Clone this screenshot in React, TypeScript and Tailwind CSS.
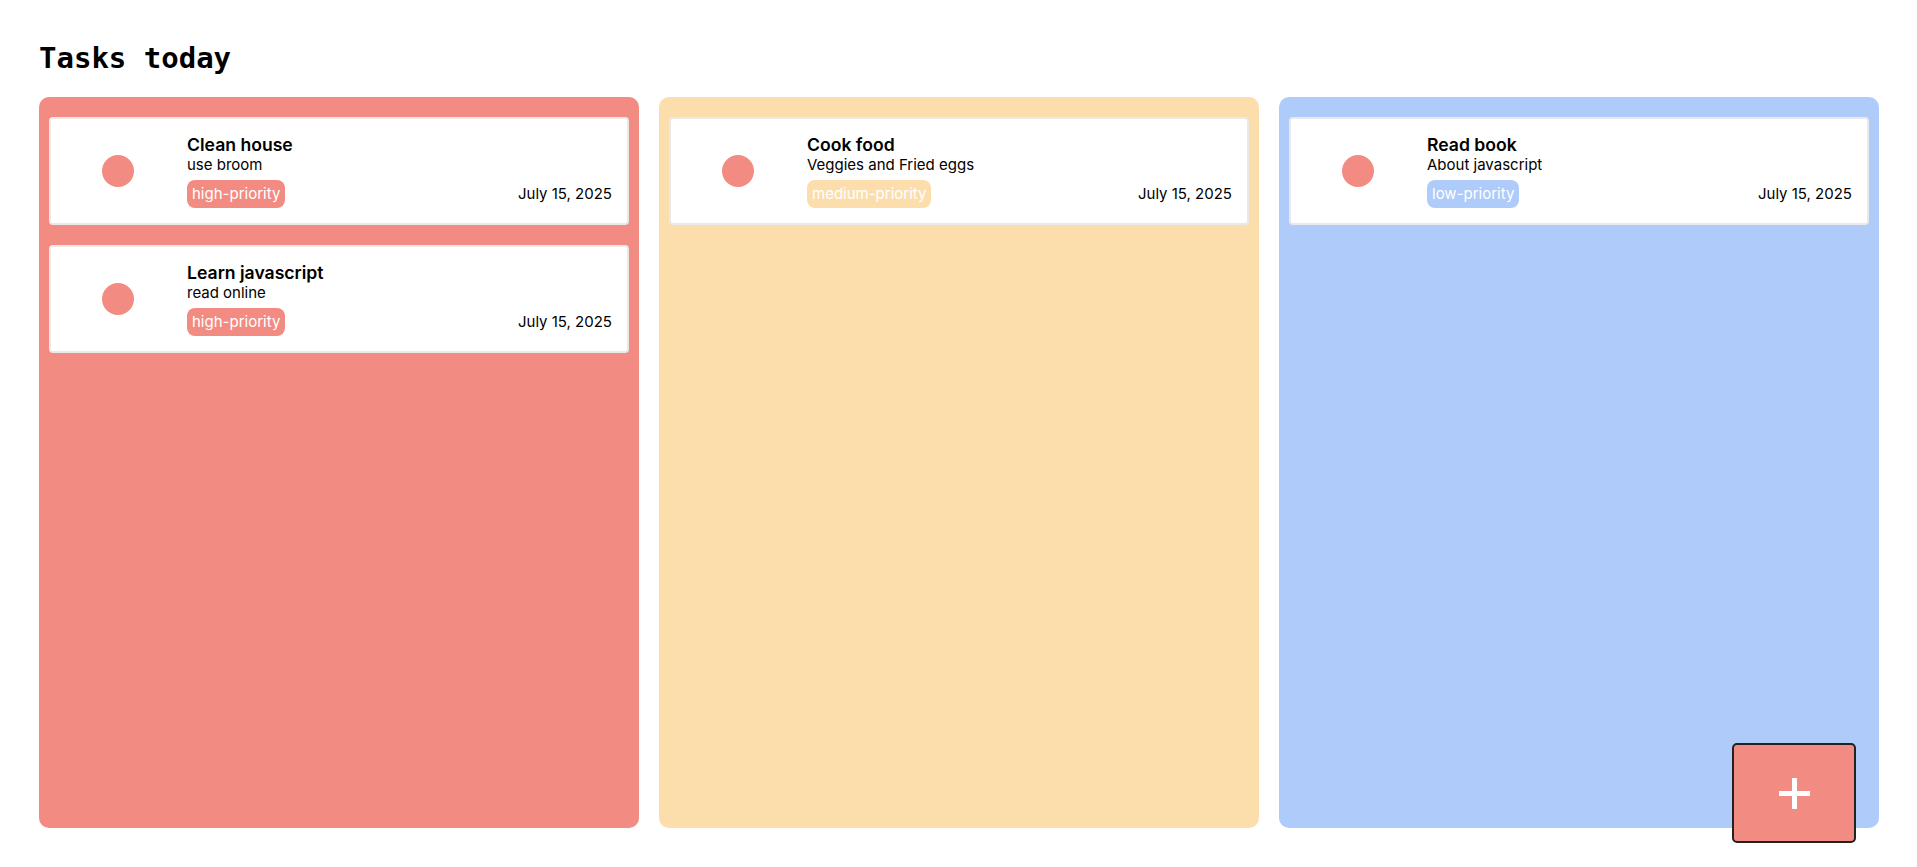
const COLUMNS = [
  {
    color: 'bg-[#f28b82]',
    tasks: [
      { title: 'Clean house', desc: 'use broom', priority: 'high-priority', date: 'July 15, 2025' },
      { title: 'Learn javascript', desc: 'read online', priority: 'high-priority', date: 'July 15, 2025' },
    ],
  },
  {
    color: 'bg-[#fcdead]',
    tasks: [
      { title: 'Cook food', desc: 'Veggies and Fried eggs', priority: 'medium-priority', date: 'July 15, 2025' },
    ],
  },
  {
    color: 'bg-[#aecbfa]',
    tasks: [
      { title: 'Read book', desc: 'About javascript', priority: 'low-priority', date: 'July 15, 2025' },
    ],
  },
];

function TaskCard({ task, color }: { task: (typeof COLUMNS)[number]['tasks'][number]; color: string }) {
  return (
    <div className="flex items-center bg-white border-2 border-[#e9e9e9] rounded-[4px] p-[15px]">
      {/* dot */}
      <div className="w-[121px] shrink-0 flex items-center">
        <div className="ml-[36px] w-8 h-8 rounded-full bg-[#f28b82]" />
      </div>
      {/* text */}
      <div className="flex-1 min-w-0">
        <p className="text-[17.6px] font-semibold text-black leading-[22px]">{task.title}</p>
        <p className="text-[15px] text-black leading-[1.21]">{task.desc}</p>
        <div className="flex items-end justify-between mt-[6px]">
          <span className={`${color} text-white text-[15px] leading-[1.21] px-[5px] py-[5px] rounded-[8px]`}>
            {task.priority}
          </span>
          <span className="text-[15px] text-black leading-[1.21] pb-[5px]">{task.date}</span>
        </div>
      </div>
    </div>
  );
}

export default function App() {
  return (
    <div className="min-h-screen bg-white pl-[39px] pr-[38px] pt-[41px] font-['Inter','Noto_Sans',sans-serif]">
      <h1 className="font-['DejaVu_Sans_Mono',monospace] font-bold text-[29px] leading-[1.2] text-black mb-[21px]">
        Tasks today
      </h1>

      <div className="grid grid-cols-3 gap-5">
        {COLUMNS.map((col, i) => (
          <div key={i} className={`${col.color} h-[731px] rounded-[10px] pt-5 px-[10px] flex flex-col gap-5`}>
            {col.tasks.map((t) => (
              <TaskCard key={t.title} task={t} color={col.color} />
            ))}
          </div>
        ))}
      </div>

      {/* add button */}
      <button className="fixed right-[61px] bottom-[24px] w-[124px] h-[100px] bg-[#f28b82] border-2 border-[#222] rounded-[5px] flex items-center justify-center">
        <svg width="31" height="31" viewBox="0 0 31 31">
          <rect x="0" y="13" width="31" height="5" fill="white" />
          <rect x="13" y="0" width="5" height="31" fill="white" />
        </svg>
      </button>
    </div>
  );
}
